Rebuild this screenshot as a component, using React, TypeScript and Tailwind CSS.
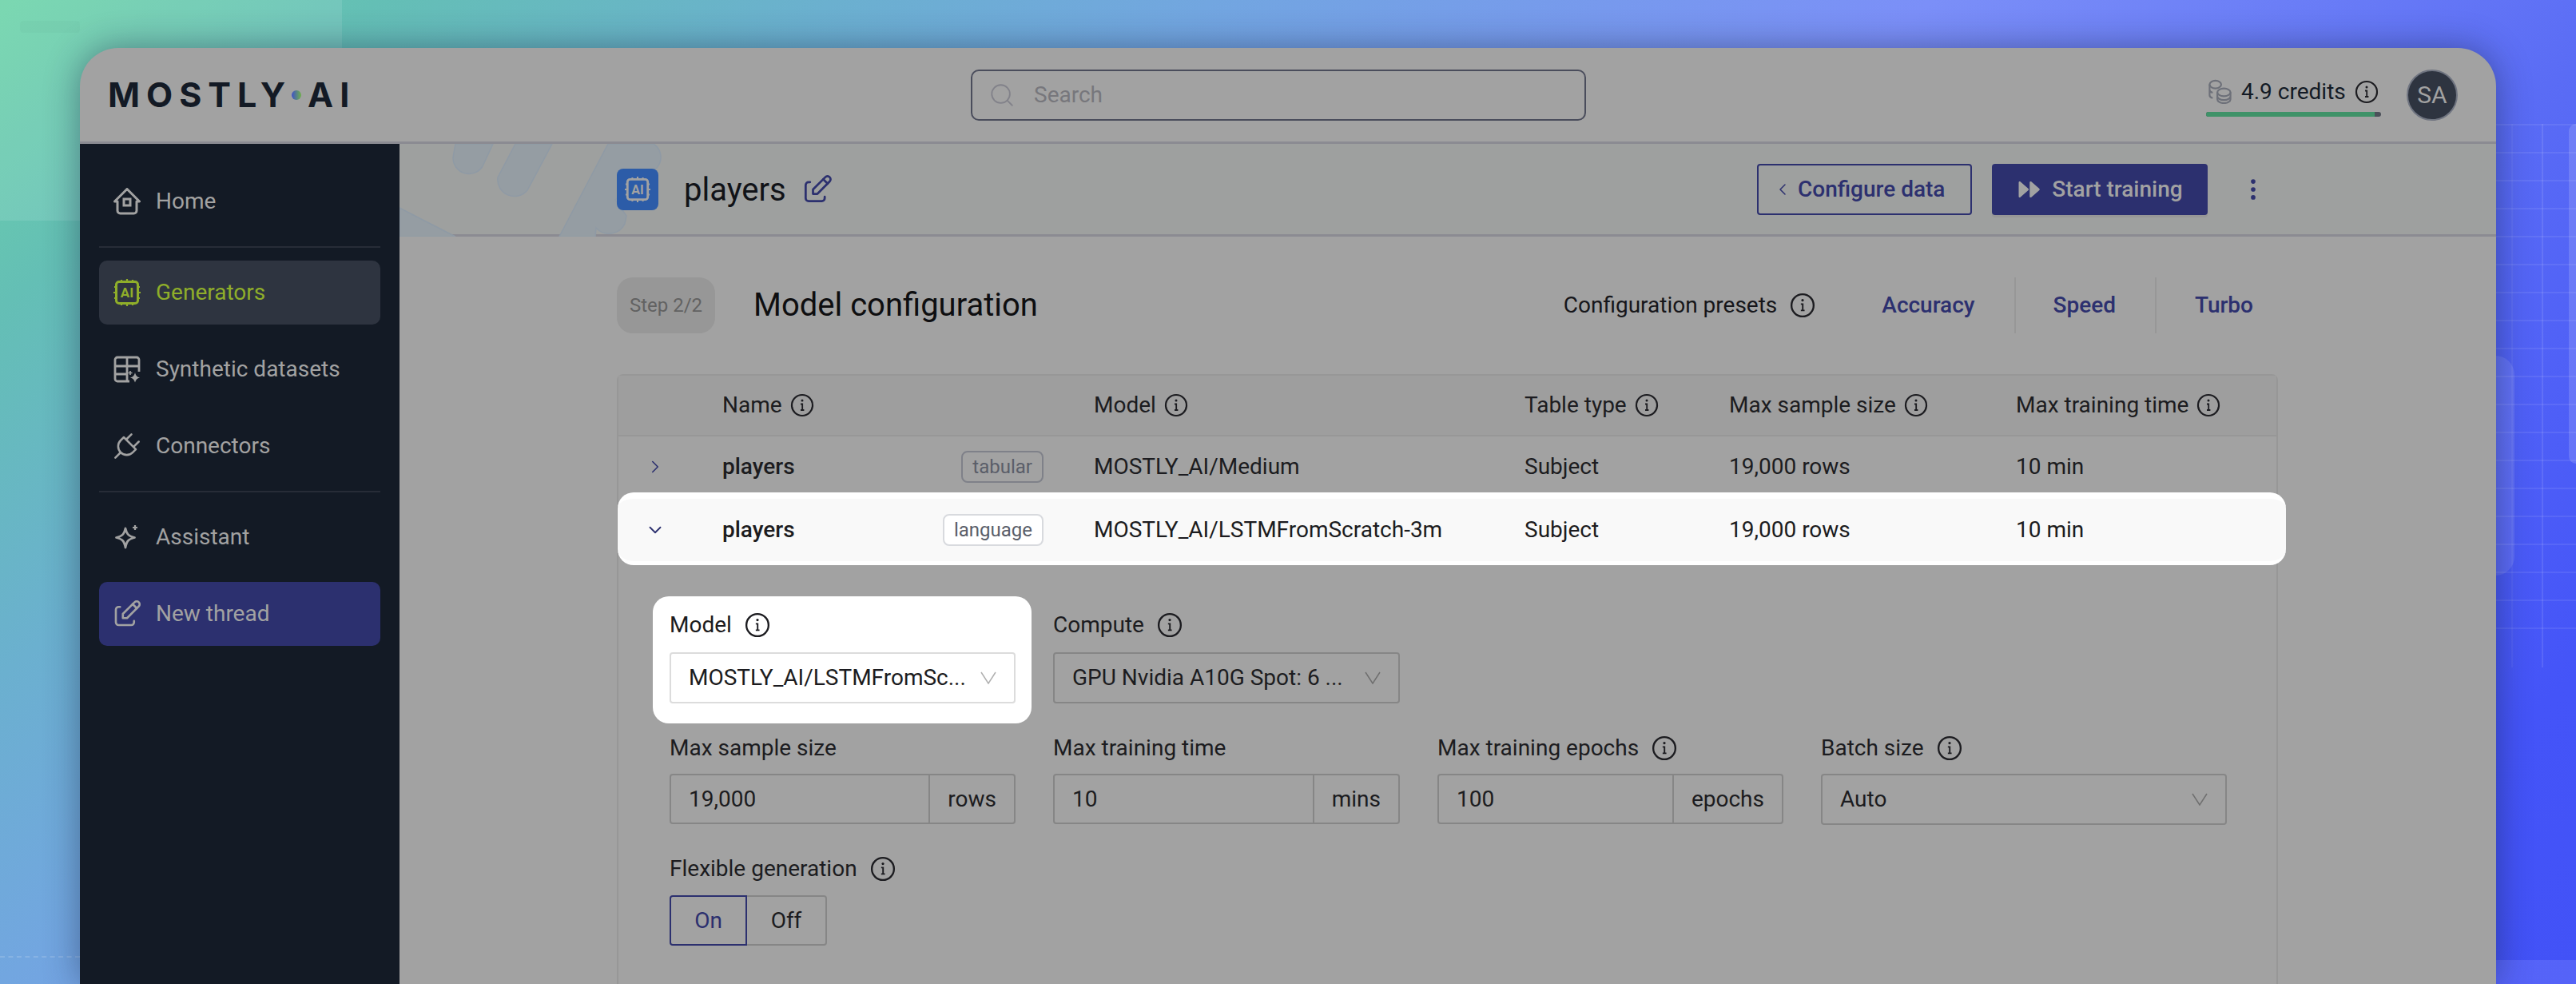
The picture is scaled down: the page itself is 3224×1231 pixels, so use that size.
import { ReactNode } from 'react';
import { ChevronDown, ChevronLeft, ChevronRight, Search } from 'lucide-react';
import { TbDotsVertical, TbEdit, TbPlayerTrackNextFilled, TbPlug } from 'react-icons/tb';

const Info = ({ className = 'w-[30px] h-[30px]' }: { className?: string }) => (
  <svg viewBox="0 0 30 30" fill="none" stroke="currentColor" className={`shrink-0 text-[#1c1c20] ${className}`}>
    <circle cx="15" cy="15" r="13" strokeWidth="2.2" />
    <path d="M13 13.5h2.2V21M13 21h4.4" strokeWidth="1.8" />
    <circle cx="15" cy="9" r="1.5" fill="currentColor" stroke="none" />
  </svg>
);

const ChipIcon = ({ className = '' }: { className?: string }) => (
  <svg viewBox="0 0 34 34" fill="none" stroke="currentColor" className={className}>
    <rect x="3.5" y="3.5" width="27" height="27" rx="3.5" strokeWidth="3" />
    <path d="M10 1v2M17 0v3M24 1v2M10 31v2M17 31v3M24 31v2M1 10h2M0 17h3M1 24h2M31 10h2M31 17h3M31 24h2" strokeWidth="2.2" />
    <text x="17" y="23" textAnchor="middle" fill="currentColor" stroke="none" fontSize="17" fontWeight="700" fontFamily="Roboto, sans-serif">
      AI
    </text>
  </svg>
);

const HomeIcon = () => (
  <svg viewBox="0 0 34 34" fill="none" stroke="currentColor" strokeWidth="3" className="w-[34px] h-[34px]">
    <path d="M1.500 17 17 1.500 32.500 17h-3.500v11.500a3.500 3.500 0 0 1-3.500 3.500h-17a3.500 3.500 0 0 1-3.500-3.500V17Z" strokeLinejoin="round" />
    <rect x="13" y="14" width="8" height="8" />
  </svg>
);

const TableSparkIcon = () => (
  <svg viewBox="0 0 34 34" fill="none" stroke="currentColor" strokeWidth="2.800" className="w-[34px] h-[34px]">
    <path d="M20 32H5a3 3 0 0 1-3-3V5a3 3 0 0 1 3-3h24a3 3 0 0 1 3 3v15M2 13h30M17 2v30M2 23h15" />
    <path d="M27 21c1 4 2.500 5.500 6 6.500-3.500 1-5 2.500-6 6-1-3.500-2.500-5-6-6 3.500-1 5-2.500 6-6.500Z" fill="currentColor" stroke="none" />
    <path d="M21 19v5M18.500 21.500h5" strokeWidth="1.600" />
  </svg>
);

const StarIcon = () => (
  <svg viewBox="0 0 34 34" fill="none" stroke="currentColor" strokeWidth="2.800" className="w-[34px] h-[34px]" strokeLinejoin="round">
    <path d="M15 6c1.500 7 3.500 9.500 11.500 11.500C18.500 19.500 16.500 22 15 30c-1.500-8-3.500-10.500-11.500-12.500C11.500 15.500 13.500 13 15 6Z" />
    <path d="M27 2v6M24 5h6" strokeWidth="2.200" />
  </svg>
);

const CoinsIcon = () => (
  <svg viewBox="0 0 32 32" fill="none" stroke="#6d7079" strokeWidth="2.200" className="w-[31px] h-[31px]">
    <ellipse cx="10" cy="7" rx="7.500" ry="5" />
    <path d="M2.500 7v14c0 1.500 1.500 2.800 4 3.500M2.500 14c0 1.500 1.500 2.800 4 3.500" />
    <ellipse cx="21" cy="17" rx="8.500" ry="5" />
    <path d="M12.500 17v9c0 2.800 3.800 5 8.500 5s8.500-2.200 8.500-5v-9M12.500 22c0 2.800 3.800 5 8.500 5s8.500-2.200 8.500-5" />
  </svg>
);

const SelectChevron = ({ className = '' }: { className?: string }) => (
  <svg viewBox="0 0 20 16" fill="none" stroke="currentColor" strokeWidth="1.500" className={`h-[16px] w-[20px] shrink-0 ${className}`}>
    <path d="M1 1l9 14 9-14" />
  </svg>
);

function NavItem({ icon, label, className = 'text-[#a2a2a2]' }: { icon: ReactNode; label: string; className?: string }) {
  return (
    <div className={`flex h-[80px] items-center gap-[19px] rounded-[10px] px-[18px] text-[28px] ${className}`}>
      <span className="flex w-[34px] justify-center">{icon}</span>
      {label}
    </div>
  );
}

function Label({ text, info = true, gap = 'gap-[16px]' }: { text: string; info?: boolean; gap?: string }) {
  return (
    <div className={`flex h-[36px] items-center whitespace-nowrap text-[28px] text-[#1c1c20] ${gap}`}>
      {text}
      {info && <Info className="w-[32px] h-[32px]" />}
    </div>
  );
}

function SelectBox({ text, light = false }: { text: string; light?: boolean }) {
  return (
    <div className={`flex h-[64px] items-center justify-between rounded-[4px] border-2 pl-[22px] pr-[22px] text-[28px] text-[#1c1c20] ${light ? 'border-[#dcdcdc] bg-white' : 'border-[#868686]'}`}>
      <span className="whitespace-nowrap">{text}</span>
      <SelectChevron className={light ? 'text-[#b0b0b0]' : 'text-[#6f6f6f]'} />
    </div>
  );
}

function UnitInput({ value, unit }: { value: string; unit: string }) {
  return (
    <div className="flex h-[63px] text-[28px] text-[#1c1c20]">
      <div className="flex flex-1 items-center rounded-l-[4px] border-2 border-[#868686] pl-[22px]">{value}</div>
      <div className="flex items-center rounded-r-[4px] border-2 border-l-0 border-[#868686] px-[22px]">{unit}</div>
    </div>
  );
}

const cols = 'grid grid-cols-[130px_465px_539px_256px_359px_1fr] items-center text-[28px] text-[#1c1c20]';

function Head({ text }: { text: string }) {
  return (
    <div className="flex items-center gap-[10px] whitespace-nowrap">
      {text}
      <Info />
    </div>
  );
}

function Row({ badge, model, open }: { badge: string; model: string; open?: boolean }) {
  return (
    <div className={`${cols} ${open ? 'relative -ml-px -mr-[12px] h-[91px] rounded-[20px] border-t-[8px] border-b-[5px] border-white bg-[#f9f9f9] pl-px' : 'h-[70px] pt-[6px]'}`}>
      <div className="flex pl-[33px] text-[#2c306f]">
        {open ? <ChevronDown className="h-[26px] w-[26px]" strokeWidth={1.7} /> : <ChevronRight className="h-[26px] w-[26px]" strokeWidth={1.5} />}
      </div>
      <div className="flex items-center justify-between pr-[63px] font-medium">
        players
        <span className={`flex h-[40px] items-center rounded-[8px] border-2 px-[12px] text-[24px] font-normal text-[#5a5e69] ${open ? 'border-[#d8dade] bg-white' : 'border-[#7f8189]'}`}>
          {badge}
        </span>
      </div>
      <div className="whitespace-nowrap">{model}</div>
      <div>Subject</div>
      <div>19,000 rows</div>
      <div>10 min</div>
    </div>
  );
}

export default function App() {
  return (
    <div className="relative h-[1231px] w-[3224px] overflow-hidden bg-[linear-gradient(141deg,#6cd3a8_0%,#64bfb5_10%,#6bb0cf_22%,#72a6e0_32%,#7b8ff8_51%,#5a6cf5_70%,#4454f8_90%,#4252f7_100%)] pl-[100px] pt-[60px] font-['Roboto',sans-serif]">
      {/* blurred decoration behind the window */}
      <div className="absolute left-0 top-0 h-[276px] w-[428px] bg-white/10" />
      <div className="absolute left-[25px] top-[26px] h-[15px] w-[75px] rounded bg-black/[0.02]" />
      <div className="absolute left-0 top-[1196px] h-px w-[100px] border-t-2 border-dashed border-white/15" />
      <div className="absolute bottom-0 right-0 h-[30px] w-[100px] bg-white/10" />
      <div className="absolute right-0 top-[155px] h-[645px] w-[100px] bg-[repeating-linear-gradient(to_bottom,rgba(255,255,255,0.08)_0_2px,transparent_2px_35px)]" />
      <div className="absolute left-[3143px] top-[155px] h-[680px] w-[2px] bg-white/5" />
      <div className="absolute left-[3181px] top-[155px] h-[680px] w-[2px] bg-white/10" />
      <div className="absolute left-[3100px] top-[445px] h-[275px] w-[47px] rounded-r-[24px] bg-white/10" />
      <div className="absolute left-[3215px] top-[155px] h-[425px] w-[9px] rounded-l-[10px] bg-white/15" />

      <div className="relative flex h-[1171px] w-[3024px] flex-col overflow-hidden rounded-t-[48px] bg-[#a2a2a2] shadow-[0_0_44px_rgba(20,30,60,0.45)]">
        <header className="flex h-[120px] shrink-0 items-center border-b-[3px] border-[#8b8b92]">
          <div className="flex w-[1115px] items-center pl-[35px] text-[43px] font-bold leading-none tracking-[8px] text-[#131a25] font-['Inter',sans-serif]">
            MOSTLY
            <span className="mr-[8px] h-[12px] w-[12px] shrink-0 rounded-full bg-[linear-gradient(90deg,#3f51c8,#6fb04a)]" />
            AI
          </div>
          <div className="flex h-[64px] w-[770px] items-center gap-[23px] rounded-[10px] border-2 border-[#4a4d5c] pl-[20px] text-[28px] text-[#77777c]">
            <Search className="h-[34px] w-[34px] text-[#82828a]" strokeWidth={1.3} />
            Search
          </div>
          <div className="ml-auto mr-[48px] flex items-center gap-[32px]">
            <div className="flex w-[219px] flex-col">
              <div className="flex items-center gap-[11px] pl-[2px] pt-[2px] text-[28px] text-[#131a25]">
                <CoinsIcon />
                4.9 credits
                <Info />
              </div>
              <div className="mt-[4px] flex h-[6px] overflow-hidden rounded-full bg-[#4b5059]">
                <div className="w-[211px] bg-[#3f9268]" />
              </div>
            </div>
            <div className="flex h-[64px] w-[64px] items-center justify-center rounded-full border-2 border-[#6f7480] bg-[#2e3440] text-[30px] text-[#a2a2a2]">SA</div>
          </div>
        </header>

        <div className="flex min-h-0 flex-1">
          <aside className="flex w-[400px] shrink-0 flex-col gap-[16px] bg-[#131a25] px-[24px] pt-[32px]">
            <NavItem icon={<HomeIcon />} label="Home" />
            <div className="h-[2px] bg-[#272c37]" />
            <NavItem icon={<ChipIcon className="h-[34px] w-[34px]" />} label="Generators" className="bg-[#2e3440] text-[#8fae2a]" />
            <NavItem icon={<TableSparkIcon />} label="Synthetic datasets" />
            <NavItem icon={<TbPlug size={44} strokeWidth={1.4} className="shrink-0" />} label="Connectors" />
            <div className="h-[2px] bg-[#272c37]" />
            <NavItem icon={<StarIcon />} label="Assistant" />
            <NavItem icon={<TbEdit size={42} strokeWidth={1.5} className="shrink-0" />} label="New thread" className="bg-[#2c306f] text-[#a2a2a2]" />
          </aside>

          <main className="min-w-0 flex-1">
            <div className="relative flex h-[116px] items-center border-b-[3px] border-[#8b8b92] bg-[#9ea09f] pl-[272px] pr-[287px]">
              <svg viewBox="0 0 340 116" className="absolute left-0 top-0 h-[116px] w-[340px]" fill="#959da3" stroke="#8f9aa5" strokeWidth="1.500">
                <path d="M70 0 67 17A20 20 0 0 0 104 28L117 0Z" />
                <path d="M145 0 123 42A21 21 0 0 0 160 58L191 0Z" />
                <path d="M261 0 200 116H245L246 105A22 22 0 0 0 282 100L284 90 270 70 322 30A20 20 0 0 0 318 0Z" />
                <path d="M0 80 70 116H0Z" />
              </svg>
              <div className="relative flex h-[52px] w-[52px] items-center justify-center rounded-[8px] bg-[#2c5ca8] text-[#a2a2a2]">
                <ChipIcon className="h-[32px] w-[32px]" />
              </div>
              <span className="relative ml-[32px] pt-[2px] text-[40px] leading-none text-[#111318]">players</span>
              <TbEdit size={44} strokeWidth={1.5} className="relative ml-[17px] text-[#2c306f]" />
              <div className="relative ml-auto flex items-center text-[28px] font-medium">
                <div className="flex h-[64px] w-[269px] items-center gap-[7px] rounded-[4px] border-2 border-[#2c306f] pl-[18px] text-[#2c306f]">
                  <ChevronLeft className="h-[24px] w-[24px]" strokeWidth={1.5} />
                  Configure data
                </div>
                <div className="ml-[25px] flex h-[64px] w-[270px] items-center justify-center gap-[14px] rounded-[4px] bg-[#2c306f] text-[#a2a2a2] shadow-[0_3px_0_#979797]">
                  <TbPlayerTrackNextFilled size={30} />
                  Start training
                </div>
                <TbDotsVertical size={34} className="ml-[40px] text-[#2c306f]" />
              </div>
            </div>

            <section className="pl-[272px] pr-[273px]">
              <div className="mt-[51px] flex h-[70px] items-center">
                <div className="flex h-[70px] w-[123px] items-center justify-center rounded-[20px] bg-[#979797] text-[24px] text-[#626262]">Step 2/2</div>
                <h1 className="ml-[48px] text-[40px] leading-none text-[#0e0e10]">Model configuration</h1>
                <div className="ml-auto mr-[31px] flex items-center text-[28px]">
                  <span className="text-[#16161a]">Configuration presets</span>
                  <Info className="ml-[16px] w-[32px] h-[32px]" />
                  <span className="ml-[83px] font-medium text-[#2c306f]">Accuracy</span>
                  <div className="ml-[49px] h-[70px] w-[2px] bg-[#979797]" />
                  <span className="ml-[47px] font-medium text-[#2c306f]">Speed</span>
                  <div className="ml-[49px] h-[70px] w-[2px] bg-[#979797]" />
                  <span className="ml-[48px] font-medium text-[#2c306f]">Turbo</span>
                </div>
              </div>

              <div className="mt-[51px] h-[800px] rounded-t-[8px] border-x-2 border-t-2 border-[#979797]">
                <div className={`${cols} h-[76px] border-b-2 border-[#979797] bg-[#9e9e9e]`}>
                  <div />
                  <Head text="Name" />
                  <Head text="Model" />
                  <Head text="Table type" />
                  <Head text="Max sample size" />
                  <Head text="Max training time" />
                </div>
                <Row badge="tabular" model="MOSTLY_AI/Medium" />
                <Row badge="language" model="MOSTLY_AI/LSTMFromScratch-3m" open />

                <div className="pl-[64px]">
                  <div className="mt-[39px] grid grid-cols-[433px_434px_433px_508px] gap-x-[47px]">
                    <div className="-ml-[21px] -mr-[20px] h-[159px] rounded-[20px] bg-white pl-[21px] pr-[20px] pt-[18px]">
                      <Label text="Model" />
                      <div className="mt-[16px]">
                        <SelectBox text="MOSTLY_AI/LSTMFromSc..." light />
                      </div>
                    </div>
                    <div className="pt-[18px]">
                      <Label text="Compute" />
                      <div className="mt-[16px]">
                        <SelectBox text="GPU Nvidia A10G Spot: 6 ..." />
                      </div>
                    </div>
                    <div />
                    <div />
                    <div className="mt-[13px]">
                      <Label text="Max sample size" info={false} />
                      <div className="mt-[14px]">
                        <UnitInput value="19,000" unit="rows" />
                      </div>
                    </div>
                    <div className="mt-[13px]">
                      <Label text="Max training time" info={false} />
                      <div className="mt-[14px]">
                        <UnitInput value="10" unit="mins" />
                      </div>
                    </div>
                    <div className="mt-[13px]">
                      <Label text="Max training epochs" />
                      <div className="mt-[14px]">
                        <UnitInput value="100" unit="epochs" />
                      </div>
                    </div>
                    <div className="mt-[13px]">
                      <Label text="Batch size" />
                      <div className="mt-[14px]">
                        <SelectBox text="Auto" />
                      </div>
                    </div>
                  </div>

                  <div className="mt-[37px]">
                    <Label text="Flexible generation" />
                    <div className="mt-[15px] flex h-[63px] text-[28px]">
                      <div className="flex w-[97px] items-center justify-center rounded-l-[4px] border-2 border-[#2c306f] text-[#2c306f]">On</div>
                      <div className="flex w-[100px] items-center justify-center rounded-r-[4px] border-2 border-l-0 border-[#868686] text-[#1c1c20]">Off</div>
                    </div>
                  </div>
                </div>
              </div>
            </section>
          </main>
        </div>
      </div>
    </div>
  );
}
